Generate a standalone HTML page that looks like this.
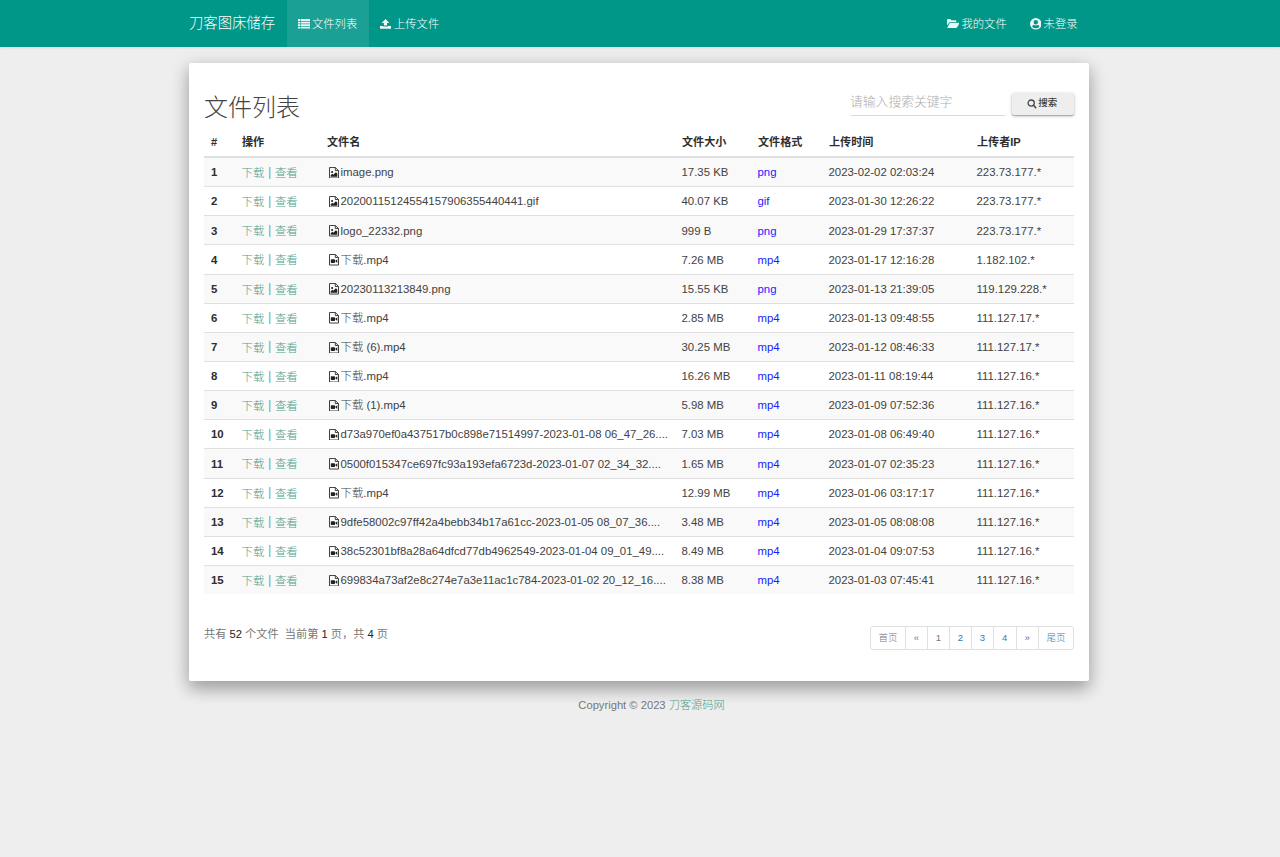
<!DOCTYPE html>
<html lang="zh-CN">
<head>
<meta charset="utf-8">
<title>文件列表 - 刀客图床储存</title>
<style>
*{box-sizing:border-box}
html,body{margin:0;padding:0}
body{width:1280px;height:857px;overflow:hidden;background:#eeeeee;font-family:"Liberation Sans","Noto Sans CJK SC",sans-serif;font-size:14px;line-height:1.42857;color:#333;position:relative}
a{text-decoration:none;color:#009688}
.navbar{position:absolute;left:0;top:0;width:1280px;height:47px;background:#009688;box-shadow:0 1px 2px rgba(0,0,0,.08);color:#fff}
.navbar .brand{position:absolute;left:189px;top:0;height:47px;line-height:46px;font-size:14.35px;color:#fff;font-weight:300}
.navbar .item{position:absolute;top:0;height:47px;line-height:49px;font-size:11.3px;font-weight:300;color:#fff;white-space:nowrap}
.navbar .ic{position:absolute;display:block;opacity:.92}
.navbar .item.active{background:rgba(255,255,255,.1)}
.panel{position:absolute;left:189px;top:63px;width:900px;height:617.5px;background:#fff;border-radius:2px;box-shadow:0 7.5px 16px rgba(0,0,0,.2),0 5.6px 18.8px rgba(0,0,0,.19)}
h2{position:absolute;left:15px;top:25.3px;margin:0;font-size:24px;font-weight:300;line-height:40px;color:#444;white-space:nowrap}
.search{position:absolute;left:662px;top:28px;padding-top:.7px;text-indent:-1px;width:154px;height:25px;border-bottom:1px solid #d8d8d8;font-size:12.8px;line-height:20px;color:#adadad;font-weight:300;white-space:nowrap}
.btn{position:absolute;left:823px;top:29.5px;width:61.5px;height:22px;border-radius:2px;background:#eeeeee;box-shadow:0 1px 1.5px rgba(0,0,0,.32),0 1px 4px rgba(0,0,0,.14);font-size:9.5px;line-height:21px;font-weight:500;color:#3a3a3a;white-space:nowrap}
.btn span{position:absolute;left:26.3px;top:-.4px}
table{position:absolute;left:15px;top:65px;width:870px;border-collapse:separate;border-spacing:0;table-layout:fixed;font-size:11.4px;color:#424242}
th{font-size:11.1px;height:30px;text-align:left;padding:1.4px 0 0 8px;font-weight:bold;border-bottom:2px solid #e0e0e0;color:#2e2e2e;white-space:nowrap}
td{font-weight:300;height:29.143px;padding:.6px 0 0 7.5px;border-bottom:1px solid #e0e0e0;white-space:nowrap;overflow:hidden}
tbody tr:last-child td{border-bottom:0;height:28.143px}
tbody tr:nth-child(odd) td{background:#f9f9f9}
td.n{font-weight:bold;color:#2e2e2e;padding-left:7px}
th:first-child{padding-left:7px}
td.op a{color:#4f9c8a;position:relative;top:.8px}
td.op i{font-style:normal;color:#72ad9f;font-size:13px;line-height:1;position:relative;top:-.6px}
td.fmt{color:#1c1cff}
td.fmt a{color:#2a1fd6}
.fi{display:inline-block;vertical-align:-2px;margin:0 2px 0 2px}
.total{position:absolute;left:15px;top:562px;font-size:11.2px;line-height:18px;color:#777;white-space:nowrap}
.total b{font-weight:normal;color:#222}
.pager{position:absolute;left:681px;top:563px;width:204px;height:24px;display:flex;font-size:9.5px;font-weight:300;border:1px solid #e0e0e0;border-radius:3px;background:#fff}
.pager span{display:block;height:22px;line-height:22px;text-align:center;border-left:1px solid #e0e0e0;color:#337ab7}
.pager span:first-child{border-left:0}
.pager span.d{color:#777}
.footer{position:absolute;left:23px;top:696.5px;width:1257px;text-align:center;font-size:11.2px;line-height:16px;color:#777}
.footer a{color:#4f9c8a;font-weight:300}
</style>
</head>
<body>
<div class="navbar">
  <div class="brand">刀客图床储存</div>
  <div class="item active" style="left:286.5px;width:82px"></div>
  <svg class="ic" style="left:298px;top:18.5px" width="12" height="10" viewBox="0 0 12 10"><path d="M0 .1h2.100v1.800H0zM2.700 .1h9.300v1.800H2.700zM0 2.650h2.100v1.800H0zM2.700 2.650h9.300v1.800H2.700zM0 5.200h2.100v1.800H0zM2.700 5.200h9.300v1.800H2.700zM0 7.750h2.100v1.800H0zM2.700 7.750h9.300v1.800H2.700z" fill="#fff"/></svg>
  <div class="item" style="left:312px">文件列表</div>
  <svg class="ic" style="left:380px;top:18.5px" width="11" height="10" viewBox="0 0 11 10"><path d="M5.5 0L9.3 3.9H7.1V6.6H3.9V3.9H1.7Z" fill="#fff"/><path d="M0 6.9H3V7.5H8V6.9H11V9.8H0Z" fill="#fff"/></svg>
  <div class="item" style="left:394px">上传文件</div>
  <svg class="ic" style="left:946.5px;top:19px" width="12.5" height="9" viewBox="0 0 12.5 9"><path d="M0 .9Q0 0 .9 0H3.2Q4 0 4 .9V1.2H8.4Q9.3 1.200 9.300 2.100V3H3.300Q2.500 3 2 3.700L0 6.500Z" fill="#fff"/><path d="M3.400 3.800H12.100Q12.700 3.800 12.300 4.400L10.200 8.200Q9.700 9 8.900 9H.8Q.1 9 .5 8.300L2.400 4.500Q2.800 3.800 3.400 3.800Z" fill="#fff"/></svg>
  <div class="item" style="left:961.5px">我的文件</div>
  <svg class="ic" style="left:1029.7px;top:18px" width="11.6" height="11.6" viewBox="0 0 12 12"><path fill-rule="evenodd" d="M6 0A6 6 0 1 1 6 12A6 6 0 1 1 6 0ZM6 2.100A2.300 2.300 0 1 0 6 6.700A2.300 2.300 0 1 0 6 2.100ZM2.300 9.100Q3.800 10.700 6 10.700Q8.200 10.700 9.700 9.100Q9.500 7.300 8.200 6.900Q7.300 7.700 6 7.700Q4.700 7.700 3.800 6.900Q2.500 7.300 2.300 9.100Z" fill="#fff"/></svg>
  <div class="item" style="left:1043.6px">未登录</div>
</div>
<div class="panel">
  <h2>文件列表</h2>
  <div class="search">请输入搜索关键字</div>
  <div class="btn"><svg width="10" height="10" viewBox="0 0 10 10" style="position:absolute;left:14.8px;top:6.5px"><circle cx="4.2" cy="4.1" r="3.100" fill="none" stroke="#444" stroke-width="1.300"/><path d="M6.400 6.300L8.700 8.600" stroke="#444" stroke-width="1.500" stroke-linecap="round"/></svg><span>搜索</span></div>
  <table>
    <colgroup><col style="width:30px"><col style="width:85px"><col style="width:355px"><col style="width:76px"><col style="width:71px"><col style="width:148px"><col></colgroup>
    <thead><tr><th>#</th><th>操作</th><th>文件名</th><th>文件大小</th><th>文件格式</th><th>上传时间</th><th>上传者IP</th></tr></thead>
    <tbody>
    <tr><td class="n">1</td><td class="op"><a>下载</a><i> | </i><a>查看</a></td><td><svg class="fi" width="10" height="11.5" viewBox="0 0 10 12" preserveAspectRatio="none"><path d="M.5 .5H6.3L9.5 3.7V11.5H.5Z M6.3 .5V3.7H9.5" fill="none" stroke="#3c3c3c" stroke-width="1"/><circle cx="3.1" cy="5.3" r="1.05" fill="#222"/><path d="M1.7 10.2V8.6L3.3 7 4.3 8 6.9 5.4 8.3 6.8V10.2Z" fill="#222"/></svg>image.png</td><td>17.35 KB</td><td class="fmt">png</td><td>2023-02-02 02:03:24</td><td>223.73.177.*</td></tr>
    <tr><td class="n">2</td><td class="op"><a>下载</a><i> | </i><a>查看</a></td><td><svg class="fi" width="10" height="11.5" viewBox="0 0 10 12" preserveAspectRatio="none"><path d="M.5 .5H6.3L9.5 3.7V11.5H.5Z M6.3 .5V3.7H9.5" fill="none" stroke="#3c3c3c" stroke-width="1"/><circle cx="3.1" cy="5.3" r="1.05" fill="#222"/><path d="M1.7 10.2V8.6L3.3 7 4.3 8 6.9 5.4 8.3 6.8V10.2Z" fill="#222"/></svg>20200115124554157906355440441.gif</td><td>40.07 KB</td><td class="fmt">gif</td><td>2023-01-30 12:26:22</td><td>223.73.177.*</td></tr>
    <tr><td class="n">3</td><td class="op"><a>下载</a><i> | </i><a>查看</a></td><td><svg class="fi" width="10" height="11.5" viewBox="0 0 10 12" preserveAspectRatio="none"><path d="M.5 .5H6.3L9.5 3.7V11.5H.5Z M6.3 .5V3.7H9.5" fill="none" stroke="#3c3c3c" stroke-width="1"/><circle cx="3.1" cy="5.3" r="1.05" fill="#222"/><path d="M1.7 10.2V8.6L3.3 7 4.3 8 6.9 5.4 8.3 6.8V10.2Z" fill="#222"/></svg>logo_22332.png</td><td>999 B</td><td class="fmt">png</td><td>2023-01-29 17:37:37</td><td>223.73.177.*</td></tr>
    <tr><td class="n">4</td><td class="op"><a>下载</a><i> | </i><a>查看</a></td><td><svg class="fi" width="10" height="11.5" viewBox="0 0 10 12" preserveAspectRatio="none"><path d="M.5 .5H6.3L9.5 3.7V11.5H.5Z M6.3 .5V3.7H9.5" fill="none" stroke="#3c3c3c" stroke-width="1"/><rect x="1.8" y="5.4" width="4.2" height="4" rx=".7" fill="#222"/><path d="M6 7.4L8.3 5.4V9.4Z" fill="#222"/></svg>下载.mp4</td><td>7.26 MB</td><td class="fmt">mp4</td><td>2023-01-17 12:16:28</td><td>1.182.102.*</td></tr>
    <tr><td class="n">5</td><td class="op"><a>下载</a><i> | </i><a>查看</a></td><td><svg class="fi" width="10" height="11.5" viewBox="0 0 10 12" preserveAspectRatio="none"><path d="M.5 .5H6.3L9.5 3.7V11.5H.5Z M6.3 .5V3.7H9.5" fill="none" stroke="#3c3c3c" stroke-width="1"/><circle cx="3.1" cy="5.3" r="1.05" fill="#222"/><path d="M1.7 10.2V8.6L3.3 7 4.3 8 6.9 5.4 8.3 6.8V10.2Z" fill="#222"/></svg>20230113213849.png</td><td>15.55 KB</td><td class="fmt">png</td><td>2023-01-13 21:39:05</td><td>119.129.228.*</td></tr>
    <tr><td class="n">6</td><td class="op"><a>下载</a><i> | </i><a>查看</a></td><td><svg class="fi" width="10" height="11.5" viewBox="0 0 10 12" preserveAspectRatio="none"><path d="M.5 .5H6.3L9.5 3.7V11.5H.5Z M6.3 .5V3.7H9.5" fill="none" stroke="#3c3c3c" stroke-width="1"/><rect x="1.8" y="5.4" width="4.2" height="4" rx=".7" fill="#222"/><path d="M6 7.4L8.3 5.4V9.4Z" fill="#222"/></svg>下载.mp4</td><td>2.85 MB</td><td class="fmt">mp4</td><td>2023-01-13 09:48:55</td><td>111.127.17.*</td></tr>
    <tr><td class="n">7</td><td class="op"><a>下载</a><i> | </i><a>查看</a></td><td><svg class="fi" width="10" height="11.5" viewBox="0 0 10 12" preserveAspectRatio="none"><path d="M.5 .5H6.3L9.5 3.7V11.5H.5Z M6.3 .5V3.7H9.5" fill="none" stroke="#3c3c3c" stroke-width="1"/><rect x="1.8" y="5.4" width="4.2" height="4" rx=".7" fill="#222"/><path d="M6 7.4L8.3 5.4V9.4Z" fill="#222"/></svg>下载 (6).mp4</td><td>30.25 MB</td><td class="fmt">mp4</td><td>2023-01-12 08:46:33</td><td>111.127.17.*</td></tr>
    <tr><td class="n">8</td><td class="op"><a>下载</a><i> | </i><a>查看</a></td><td><svg class="fi" width="10" height="11.5" viewBox="0 0 10 12" preserveAspectRatio="none"><path d="M.5 .5H6.3L9.5 3.7V11.5H.5Z M6.3 .5V3.7H9.5" fill="none" stroke="#3c3c3c" stroke-width="1"/><rect x="1.8" y="5.4" width="4.2" height="4" rx=".7" fill="#222"/><path d="M6 7.4L8.3 5.4V9.4Z" fill="#222"/></svg>下载.mp4</td><td>16.26 MB</td><td class="fmt">mp4</td><td>2023-01-11 08:19:44</td><td>111.127.16.*</td></tr>
    <tr><td class="n">9</td><td class="op"><a>下载</a><i> | </i><a>查看</a></td><td><svg class="fi" width="10" height="11.5" viewBox="0 0 10 12" preserveAspectRatio="none"><path d="M.5 .5H6.3L9.5 3.7V11.5H.5Z M6.3 .5V3.7H9.5" fill="none" stroke="#3c3c3c" stroke-width="1"/><rect x="1.8" y="5.4" width="4.2" height="4" rx=".7" fill="#222"/><path d="M6 7.4L8.3 5.4V9.4Z" fill="#222"/></svg>下载 (1).mp4</td><td>5.98 MB</td><td class="fmt">mp4</td><td>2023-01-09 07:52:36</td><td>111.127.16.*</td></tr>
    <tr><td class="n">10</td><td class="op"><a>下载</a><i> | </i><a>查看</a></td><td><svg class="fi" width="10" height="11.5" viewBox="0 0 10 12" preserveAspectRatio="none"><path d="M.5 .5H6.3L9.5 3.7V11.5H.5Z M6.3 .5V3.7H9.5" fill="none" stroke="#3c3c3c" stroke-width="1"/><rect x="1.8" y="5.4" width="4.2" height="4" rx=".7" fill="#222"/><path d="M6 7.4L8.3 5.4V9.4Z" fill="#222"/></svg>d73a970ef0a437517b0c898e71514997-2023-01-08 06_47_26....</td><td>7.03 MB</td><td class="fmt">mp4</td><td>2023-01-08 06:49:40</td><td>111.127.16.*</td></tr>
    <tr><td class="n">11</td><td class="op"><a>下载</a><i> | </i><a>查看</a></td><td><svg class="fi" width="10" height="11.5" viewBox="0 0 10 12" preserveAspectRatio="none"><path d="M.5 .5H6.3L9.5 3.7V11.5H.5Z M6.3 .5V3.7H9.5" fill="none" stroke="#3c3c3c" stroke-width="1"/><rect x="1.8" y="5.4" width="4.2" height="4" rx=".7" fill="#222"/><path d="M6 7.4L8.3 5.4V9.4Z" fill="#222"/></svg>0500f015347ce697fc93a193efa6723d-2023-01-07 02_34_32....</td><td>1.65 MB</td><td class="fmt">mp4</td><td>2023-01-07 02:35:23</td><td>111.127.16.*</td></tr>
    <tr><td class="n">12</td><td class="op"><a>下载</a><i> | </i><a>查看</a></td><td><svg class="fi" width="10" height="11.5" viewBox="0 0 10 12" preserveAspectRatio="none"><path d="M.5 .5H6.3L9.5 3.7V11.5H.5Z M6.3 .5V3.7H9.5" fill="none" stroke="#3c3c3c" stroke-width="1"/><rect x="1.8" y="5.4" width="4.2" height="4" rx=".7" fill="#222"/><path d="M6 7.4L8.3 5.4V9.4Z" fill="#222"/></svg>下载.mp4</td><td>12.99 MB</td><td class="fmt">mp4</td><td>2023-01-06 03:17:17</td><td>111.127.16.*</td></tr>
    <tr><td class="n">13</td><td class="op"><a>下载</a><i> | </i><a>查看</a></td><td><svg class="fi" width="10" height="11.5" viewBox="0 0 10 12" preserveAspectRatio="none"><path d="M.5 .5H6.3L9.5 3.7V11.5H.5Z M6.3 .5V3.7H9.5" fill="none" stroke="#3c3c3c" stroke-width="1"/><rect x="1.8" y="5.4" width="4.2" height="4" rx=".7" fill="#222"/><path d="M6 7.4L8.3 5.4V9.4Z" fill="#222"/></svg>9dfe58002c97ff42a4bebb34b17a61cc-2023-01-05 08_07_36....</td><td>3.48 MB</td><td class="fmt">mp4</td><td>2023-01-05 08:08:08</td><td>111.127.16.*</td></tr>
    <tr><td class="n">14</td><td class="op"><a>下载</a><i> | </i><a>查看</a></td><td><svg class="fi" width="10" height="11.5" viewBox="0 0 10 12" preserveAspectRatio="none"><path d="M.5 .5H6.3L9.5 3.7V11.5H.5Z M6.3 .5V3.7H9.5" fill="none" stroke="#3c3c3c" stroke-width="1"/><rect x="1.8" y="5.4" width="4.2" height="4" rx=".7" fill="#222"/><path d="M6 7.4L8.3 5.4V9.4Z" fill="#222"/></svg>38c52301bf8a28a64dfcd77db4962549-2023-01-04 09_01_49....</td><td>8.49 MB</td><td class="fmt">mp4</td><td>2023-01-04 09:07:53</td><td>111.127.16.*</td></tr>
    <tr><td class="n">15</td><td class="op"><a>下载</a><i> | </i><a>查看</a></td><td><svg class="fi" width="10" height="11.5" viewBox="0 0 10 12" preserveAspectRatio="none"><path d="M.5 .5H6.3L9.5 3.7V11.5H.5Z M6.3 .5V3.7H9.5" fill="none" stroke="#3c3c3c" stroke-width="1"/><rect x="1.8" y="5.4" width="4.2" height="4" rx=".7" fill="#222"/><path d="M6 7.4L8.3 5.4V9.4Z" fill="#222"/></svg>699834a73af2e8c274e7a3e11ac1c784-2023-01-02 20_12_16....</td><td>8.38 MB</td><td class="fmt">mp4</td><td>2023-01-03 07:45:41</td><td>111.127.16.*</td></tr>
    </tbody>
  </table>
  <div class="total">共有 <b>52</b> 个文件&nbsp; 当前第 <b>1</b> 页，共 <b>4</b> 页</div>
  <div class="pager"><span class="d" style="width:34px">首页</span><span class="d" style="width:22px">«</span><span class="d" style="width:22px">1</span><span style="width:22px">2</span><span style="width:22px">3</span><span style="width:22.5px">4</span><span style="width:22.5px">»</span><span style="width:35px">尾页</span></div>
</div>
<div class="footer">Copyright © 2023 <a>刀客源码网</a></div>
</body>
</html>
